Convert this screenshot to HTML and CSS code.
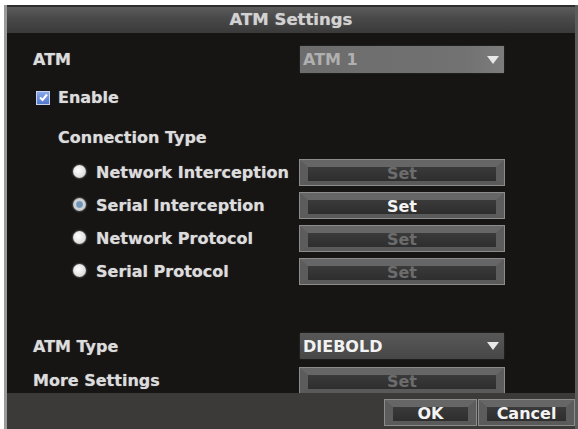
FILE: index.html
```html
<!DOCTYPE html>
<html lang="en">
<head>
    <meta charset="UTF-8">
    <meta name="viewport" content="width=device-width, initial-scale=1.0">
    <title>ATM Settings</title>
    <link rel="stylesheet" href="styles.css">
</head>
<body>
    <div class="window">
        <div class="titlebar">ATM Settings</div>

        <div class="content">
            <div class="row row-atm">
                <span class="label pad-atm">ATM</span>
                <div class="select select-off">ATM 1<span class="arrow"></span></div>
            </div>

            <div class="row row-enable">
                <span class="label pad-check">
                    <span class="checkbox">
                        <svg width="11" height="11" viewBox="0 0 11 11"><path d="M2 5.5 L4.5 8 L9 2.5" fill="none" stroke="#fff" stroke-width="2"/></svg>
                    </span>
                    Enable
                </span>
            </div>

            <div class="row row-conn">
                <span class="label pad-conn">Connection Type</span>
            </div>

            <div class="row radio-row first">
                <span class="label pad-radio"><span class="radio"></span>Network Interception</span>
                <button class="set-button" disabled>Set</button>
            </div>
            <div class="row radio-row">
                <span class="label pad-radio"><span class="radio radio-on"></span>Serial Interception</span>
                <button class="set-button">Set</button>
            </div>
            <div class="row radio-row">
                <span class="label pad-radio"><span class="radio"></span>Network Protocol</span>
                <button class="set-button" disabled>Set</button>
            </div>
            <div class="row radio-row">
                <span class="label pad-radio"><span class="radio"></span>Serial Protocol</span>
                <button class="set-button" disabled>Set</button>
            </div>

            <div class="row row-type">
                <span class="label pad-atm">ATM Type</span>
                <div class="select">DIEBOLD<span class="arrow"></span></div>
            </div>
            <div class="row row-more">
                <span class="label pad-atm">More Settings</span>
                <button class="set-button" disabled>Set</button>
            </div>
        </div>

        <div class="footer">
            <button class="set-button ok-button">OK</button>
            <button class="set-button cancel-button">Cancel</button>
        </div>
    </div>
</body>
</html>
```

FILE: styles.css
```css
body {
    margin: 0;
    background-color: white;
    font-family: "DejaVu Sans", "Liberation Sans", sans-serif;
    font-weight: bold;
    font-size: 16px;
    color: #dcdcdc;
}
.window {
    margin: 5px 0 0 4px;
    height: 424px;
    border-left: 3px solid #9a9a9a;
    border-right: 3px solid #5c5c5c;
    background-color: #161514;
    display: flex;
    flex-direction: column;
}
.titlebar {
    height: 26px;
    border-top: 2px solid #2e2e2e;
    background: linear-gradient(#5c5c5c, #4a4a4a 40%, #3a3a3a);
    text-align: center;
    line-height: 26px;
    font-size: 16.5px;
    color: #d2d2d2;
    text-shadow: 0 0 1px #999;
}
.content {
    height: 347px;
    padding-top: 13px;
}
.row {
    display: grid;
    grid-template-columns: 293px 204px;
    align-items: center;
    height: 25px;
}
.label {
    display: flex;
    align-items: center;
    white-space: nowrap;
    text-shadow: 0 0 1px #888;
}
.pad-atm {
    padding-left: 26px;
}
.pad-check {
    padding-left: 29px;
}
.pad-conn {
    padding-left: 51px;
}
.pad-radio {
    padding-left: 66px;
}
.row-atm {
    height: 27px;
}
.row-enable {
    margin-top: 12px;
}
.row-conn {
    margin-top: 15px;
}
.radio-row {
    margin-top: 8px;
}
.radio-row.first {
    margin-top: 10px;
}
.row-type {
    margin-top: 49px;
    height: 26px;
}
.row-more {
    margin-top: 8px;
    height: 26px;
}
.checkbox {
    width: 14px;
    height: 14px;
    margin-right: 8px;
    background: linear-gradient(#86a8ea, #5279cc);
    border: 1px solid #c8d4ee;
    box-sizing: border-box;
    display: flex;
    align-items: center;
    justify-content: center;
}
.radio {
    width: 13px;
    height: 13px;
    border-radius: 50%;
    margin-right: 10px;
    margin-top: -3px;
    background: radial-gradient(circle at 40% 40%, #ffffff, #e0e0e0 60%, #b0b0b0);
    box-shadow: 0 0 2px #bbb;
}
.radio-on {
    background: radial-gradient(circle, #6f95b6 30%, #d0d6dc 45%, #c4c4c4 75%, #8c8c8c);
}
.select {
    height: 100%;
    box-sizing: border-box;
    background: linear-gradient(#585858, #474747);
    color: #f2f2f2;
    padding-left: 3px;
    display: flex;
    align-items: center;
    justify-content: space-between;
    box-shadow: 0 0 2px #333;
}
.select-off {
    background: linear-gradient(90deg, #6c6c6c, #727272 80%, #7c7c7c);
    color: #b0b0b0;
}
.arrow {
    width: 0;
    height: 0;
    margin-right: 5px;
    border-left: 6px solid transparent;
    border-right: 6px solid transparent;
    border-top: 8px solid #e8e8e8;
}
.set-button {
    height: 25px;
    box-sizing: border-box;
    border-style: solid;
    border-color: #666666 #5c5c5c #5a5a5a #5c5c5c;
    border-width: 7px 8px 4px 8px;
    background: linear-gradient(#3a3a3a, #2e2e2e);
    box-shadow: 0 0 0 1px #8c8c8c;
    font-family: "DejaVu Sans", "Liberation Sans", sans-serif;
    font-weight: bold;
    font-size: 16px;
    color: #f4f4f4;
    line-height: 12px;
    padding: 0;
}
.set-button:disabled {
    color: #6c6c6c;
}
.footer {
    height: 36px;
    background-color: #3b3a39;
    display: flex;
    justify-content: flex-end;
    align-items: flex-start;
    padding-top: 7px;
    padding-right: 1px;
    box-sizing: border-box;
    gap: 3px;
}
.ok-button {
    width: 91px;
}
.cancel-button {
    width: 95px;
}
```
